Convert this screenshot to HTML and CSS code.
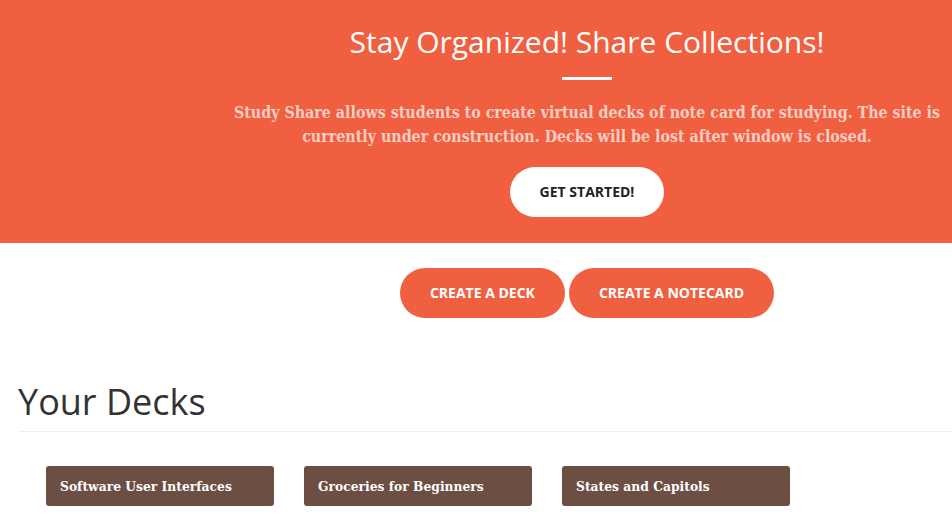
FILE: index.html
```html
<!DOCTYPE html>
<html>
<head>
<meta charset="utf-8">
<link rel="stylesheet" href="styles.css">
</head>
<body>
<header class="hero">
  <div class="hero-inner">
    <h1 class="hero-title">Stay Organized! Share Collections!</h1>
    <hr class="hero-rule">
    <p class="hero-text">Study Share allows students to create virtual decks of note card for studying. The site is currently under construction. Decks will be lost after window is closed.</p>
    <a class="btn btn-light">Get Started!</a>
  </div>
</header>
<section class="actions">
  <a class="btn btn-primary">Create a Deck</a>
  <a class="btn btn-primary">Create a Notecard</a>
</section>
<section class="decks">
  <h2 class="decks-title">Your Decks</h2>
  <hr class="decks-rule">
  <div class="deck-list">
    <div class="deck">Software User Interfaces</div>
    <div class="deck">Groceries for Beginners</div>
    <div class="deck">States and Capitols</div>
  </div>
</section>
</body>
</html>
```

FILE: styles.css
```css
* { box-sizing: border-box; }
html, body { margin: 0; padding: 0; }
body {
  font-family: "Open Sans", "Liberation Sans", sans-serif;
  background: #fff;
  overflow: hidden;
  width: 952px;
}
.hero {
  background: #F05F40;
  height: 243px;
  padding-left: 222px;
}
.hero-inner {
  display: flex;
  flex-direction: column;
  align-items: center;
  padding-top: 22px;
}
.hero-title {
  margin: 0;
  font-weight: 400;
  font-size: 30px;
  line-height: 40px;
  color: #fff;
}
.hero-rule {
  width: 50px;
  height: 3px;
  border: 0;
  background: #fff;
  margin: 15px 0 0;
}
.hero-text {
  margin: 21px 0 0;
  max-width: 730px;
  text-align: center;
  font-family: "DejaVu Serif Condensed", "DejaVu Serif", serif;
  font-weight: 700;
  font-size: 15.85px;
  line-height: 24px;
  color: rgba(255,255,255,0.7);
}
.btn {
  display: inline-block;
  font-family: "Open Sans", sans-serif;
  font-weight: 700;
  font-size: 14px;
  line-height: 20px;
  text-transform: uppercase;
  padding: 15px 30px;
  border-radius: 300px;
}
.btn-light {
  margin-top: 18px;
  background: #fff;
  color: #222;
}
.btn-primary {
  background: #F05F40;
  color: #fff;
}
.actions {
  display: flex;
  justify-content: center;
  gap: 4px;
  padding: 25px 0 0 222px;
}
.decks {
  padding: 0 0 0 18px;
}
.decks-title {
  margin: 62px 0 0;
  font-weight: 400;
  font-size: 36px;
  line-height: 44px;
  color: #333;
}
.decks-rule {
  margin: 7px 0 0;
  border: 0;
  border-top: 1px solid #eee;
}
.deck-list {
  display: flex;
  gap: 30px;
  padding: 34px 0 0 28px;
}
.deck {
  width: 228px;
  height: 40px;
  background: #6D4E42;
  border-radius: 3px;
  color: #fff;
  font-family: "DejaVu Serif Condensed", "DejaVu Serif", serif;
  font-weight: 700;
  font-size: 13.7px;
  line-height: 40px;
  padding-left: 14px;
}
```
